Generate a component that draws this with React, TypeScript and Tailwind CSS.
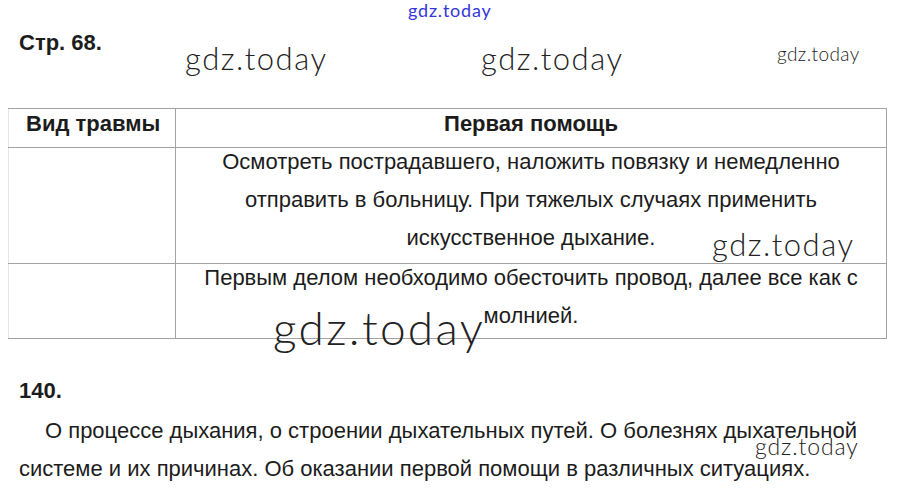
const wm = "font-['Lato',sans-serif] font-light text-[#222] leading-none whitespace-nowrap";

function Watermark({ className }: { className: string }) {
  return <div className={`absolute ${wm} ${className}`}>gdz.today</div>;
}

export default function App() {
  return (
    <div className="relative h-[493px] w-[898px] overflow-hidden bg-white font-['Liberation_Sans',Arial,sans-serif] text-[22px] text-[#1c1c1c]">
      <div className="pt-[32px] pl-[19px] font-bold leading-[22px]">Стр. 68.</div>

      <table className="mt-[54px] ml-[8px] w-[879px] border-collapse">
        <thead>
          <tr className="h-[39px]">
            <th className="w-[167px] border border-[#a3a3a3] border-l-[#e6e6e6] pl-[17px] text-left align-top font-bold leading-[30px]">
              Вид травмы
            </th>
            <th className="border border-[#a3a3a3] text-center align-top font-bold leading-[30px]">
              Первая помощь
            </th>
          </tr>
        </thead>
        <tbody>
          <tr className="h-[116px]">
            <td className="border border-[#a3a3a3] border-l-[#e6e6e6]" />
            <td className="border border-[#a3a3a3] text-center align-top">
              <div className="-mt-[5px] leading-[38px] whitespace-nowrap">
                Осмотреть пострадавшего, наложить повязку и немедленно
                <br />
                отправить в больницу. При тяжелых случаях применить
                <br />
                искусственное дыхание.
              </div>
            </td>
          </tr>
          <tr className="h-[75px]">
            <td className="border border-[#a3a3a3] border-l-[#e6e6e6]" />
            <td className="border border-[#a3a3a3] text-center align-top">
              <div className="-mt-[5px] leading-[38px] whitespace-nowrap">
                Первым делом необходимо обесточить провод, далее все как с
                <br />
                молнией.
              </div>
            </td>
          </tr>
        </tbody>
      </table>

      <div className="pt-[41px] pl-[19px] font-bold leading-[22px]">140.</div>
      <p className="mt-[10px] pl-[19px] leading-[38px] whitespace-nowrap">
        <span className="pl-[26px]">О процессе дыхания, о строении дыхательных путей. О болезнях дыхательной</span>
        <br />
        системе и их причинах. Об оказании первой помощи в различных ситуациях.
      </p>

      <Watermark className="left-[408px] top-[1px] text-[18px] tracking-[0.8px] !text-[#3535d8] !font-normal" />
      <Watermark className="left-[185px] top-[43px] text-[31px] tracking-[1.5px]" />
      <Watermark className="left-[481px] top-[43px] text-[31px] tracking-[1.5px]" />
      <Watermark className="left-[777px] top-[44px] text-[19px] tracking-[0.4px]" />
      <Watermark className="left-[712px] top-[229px] text-[31px] tracking-[1.5px]" />
      <Watermark className="left-[273px] top-[305px] text-[46px] tracking-[2.3px]" />
      <Watermark className="left-[755px] top-[435px] text-[23px] tracking-[0.9px]" />
    </div>
  );
}
